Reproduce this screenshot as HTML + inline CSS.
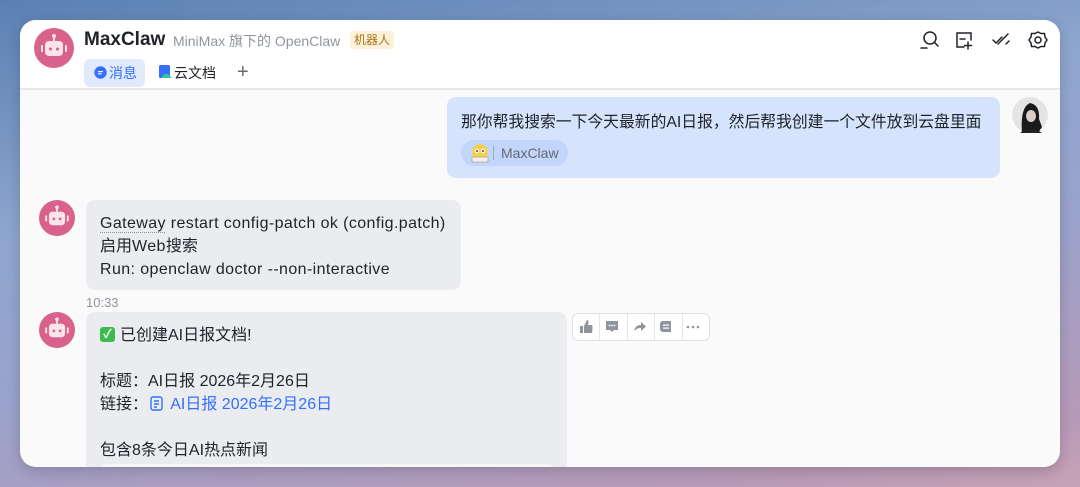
<!DOCTYPE html>
<html><head><meta charset="utf-8"><style>
*{margin:0;padding:0;box-sizing:border-box}
body{width:1080px;height:487px;overflow:hidden;position:relative;font-family:"Liberation Sans","Noto Sans CJK SC",sans-serif;background:linear-gradient(170deg,#5a80b2 0%,#8ea6cf 35%,#9aa3cc 60%,#b89ab8 90%,#c6a2b6 100%)}
.win{position:absolute;left:20px;top:20px;width:1040px;height:447px;background:#fafafa;border-radius:16px;overflow:hidden;box-shadow:0 4px 14px rgba(0,0,0,.18)}
.hdr{position:absolute;left:0;top:0;width:1040px;height:70px;background:#fff;border-bottom:2px solid #e8e8ea}
.abs{position:absolute}
.t15{font-size:16px;color:#1f2329;white-space:nowrap}
.lat{letter-spacing:.4px}
</style></head><body>
<div class="win">
 <div class="hdr">
  <svg class="abs" style="left:14px;top:8px" width="40" height="40" viewBox="0 0 40 40"><circle cx="20" cy="20" r="20" fill="#d9628c"/><rect x="19" y="8" width="2" height="5" fill="#fbe3ec"/><circle cx="20" cy="8" r="2" fill="#fbe3ec"/><rect x="11" y="13" width="18" height="15" rx="4" fill="#fbe3ec"/><rect x="7" y="17" width="2" height="7" rx="1" fill="#fbe3ec"/><rect x="31" y="17" width="2" height="7" rx="1" fill="#fbe3ec"/><circle cx="16.5" cy="21" r="1.5" fill="#d9628c"/><circle cx="23.5" cy="21" r="1.5" fill="#d9628c"/></svg>
  <div class="abs" style="left:64px;top:9px;font-size:19px;font-weight:bold;color:#1f2329">MaxClaw</div>
  <div class="abs" style="left:153px;top:11px;font-size:14px;color:#8f959e">MiniMax 旗下的 OpenClaw</div>
  <div class="abs" style="left:330px;top:11px;width:44px;height:18px;background:#fdf1d8;border-radius:4px;font-size:12px;color:#a8741a;text-align:center;line-height:18px">机器人</div>
  <div class="abs" style="left:64px;top:39px;width:61px;height:28px;background:#e1e9fc;border-radius:6px"></div>
  <svg class="abs" style="left:74px;top:46px" width="13" height="13" viewBox="0 0 13 13"><circle cx="6.5" cy="6.5" r="6.2" fill="#3370ff"/><rect x="4" y="5" width="5" height="1.2" fill="#fff"/><rect x="4" y="7.2" width="3.5" height="1.2" fill="#fff"/></svg>
  <div class="abs" style="left:89px;top:43px;font-size:14px;color:#3370ff">消息</div>
  <svg class="abs" style="left:139px;top:45px" width="13" height="14" viewBox="0 0 13 14"><rect x="0" y="0" width="11" height="13" rx="1.5" fill="#3370ff"/><path d="M3 13 Q4 8 9 9 L13 13Z" fill="#34c7a0"/></svg>
  <div class="abs" style="left:154px;top:43px;font-size:14px;color:#1f2329">云文档</div>
  <div class="abs" style="left:217px;top:41px;font-size:20px;color:#646a73;font-weight:300">+</div>
  <svg class="abs" style="left:898px;top:10px" width="130" height="20" viewBox="0 0 130 20" fill="none" stroke="#1f2329" stroke-width="1.5" stroke-linecap="round">
   <circle cx="12" cy="8" r="6"/><path d="M16.5 12.5 L20 16"/><path d="M3 18 H9"/>
   <path d="M53 10 V3 H39 V17 H46"/><path d="M42 9 H47"/><path d="M50 12 V19 M46.5 15.5 H53.5"/>
   <path d="M75 10 L78 13 L84 7"/><path d="M80 14 L90 4"/><path d="M88 14 L91 11"/>
   <circle cx="120" cy="10" r="3"/><path d="M120 2 L123 3.5 L126.5 3.5 L127 7 L129 10 L127 13 L126.5 16.5 L123 16.5 L120 18 L117 16.5 L113.5 16.5 L113 13 L111 10 L113 7 L113.5 3.5 L117 3.5Z"/>
  </svg>
 </div>
 <div class="abs" style="left:427px;top:77px;width:553px;height:81px;background:#d6e3fc;border-radius:9px"></div>
 <div class="abs t15" style="left:441px;top:89px;font-size:15.8px">那你帮我搜索一下今天最新的AI日报，然后帮我创建一个文件放到云盘里面</div>
 <div class="abs" style="left:441px;top:120px;width:107px;height:26px;background:#c3d5fa;border-radius:13px"></div>
 <svg class="abs" style="left:449px;top:122px" width="22" height="22" viewBox="0 0 22 22"><circle cx="11" cy="10" r="8" fill="#f6cf4a"/><circle cx="8" cy="9" r="2.2" fill="#fff"/><circle cx="14" cy="9" r="2.2" fill="#fff"/><circle cx="8" cy="9" r="1" fill="#6b3b1a"/><circle cx="14" cy="9" r="1" fill="#6b3b1a"/><rect x="3" y="15" width="16" height="5" fill="#f4f0e4" stroke="#888" stroke-width=".5"/></svg>
 <div class="abs" style="left:473px;top:126px;width:1px;height:14px;background:#9aa8c8"></div>
 <div class="abs" style="left:481px;top:125px;font-size:14px;color:#646a73">MaxClaw</div>
 <svg class="abs" style="left:992px;top:77px" width="36" height="36" viewBox="0 0 36 36"><circle cx="18" cy="18" r="18" fill="#e4e4e4"/><path d="M10 36 Q8 10 18 6 Q28 8 27 22 L30 30 L26 36Z" fill="#1a1a1a"/><ellipse cx="19" cy="19" rx="5" ry="6" fill="#d9cfc8"/><path d="M8 36 Q18 28 30 36Z" fill="#222"/></svg>
 <svg class="abs" style="left:19px;top:180px" width="36" height="36" viewBox="0 0 40 40"><circle cx="20" cy="20" r="20" fill="#d9628c"/><rect x="19" y="8" width="2" height="5" fill="#fbe3ec"/><circle cx="20" cy="8" r="2" fill="#fbe3ec"/><rect x="11" y="13" width="18" height="15" rx="4" fill="#fbe3ec"/><rect x="7" y="17" width="2" height="7" rx="1" fill="#fbe3ec"/><rect x="31" y="17" width="2" height="7" rx="1" fill="#fbe3ec"/><circle cx="16.5" cy="21" r="1.5" fill="#d9628c"/><circle cx="23.5" cy="21" r="1.5" fill="#d9628c"/></svg>
 <div class="abs" style="left:66px;top:180px;width:375px;height:90px;background:#ebecef;border-radius:9px"></div>
 <div class="abs t15" style="left:80px;top:192px;line-height:23px"><span class="lat">Gateway restart config-patch ok (config.patch)</span><br>启用<span class="lat">Web</span>搜索<br><span class="lat">Run: openclaw doctor --non-interactive</span></div>
 <div class="abs" style="left:80px;top:212px;width:65px;border-top:1px dotted #8f959e"></div>
 <div class="abs" style="left:66px;top:275px;font-size:13px;color:#8f959e">10:33</div>
 <svg class="abs" style="left:19px;top:292px" width="36" height="36" viewBox="0 0 40 40"><circle cx="20" cy="20" r="20" fill="#d9628c"/><rect x="19" y="8" width="2" height="5" fill="#fbe3ec"/><circle cx="20" cy="8" r="2" fill="#fbe3ec"/><rect x="11" y="13" width="18" height="15" rx="4" fill="#fbe3ec"/><rect x="7" y="17" width="2" height="7" rx="1" fill="#fbe3ec"/><rect x="31" y="17" width="2" height="7" rx="1" fill="#fbe3ec"/><circle cx="16.5" cy="21" r="1.5" fill="#d9628c"/><circle cx="23.5" cy="21" r="1.5" fill="#d9628c"/></svg>
 <div class="abs" style="left:66px;top:292px;width:481px;height:170px;background:#ebecef;border-radius:9px"></div>
 <div class="abs" style="left:80px;top:307px;width:15px;height:15px;background:#3dbb4f;border-radius:3px;color:#fff;font-size:12px;text-align:center;line-height:15px;font-weight:bold">✓</div>
 <div class="abs t15" style="left:100px;top:304px;line-height:23px">已创建AI日报文档!</div>
 <div class="abs t15" style="left:80px;top:350px;line-height:23px">标题：AI日报 2026年2月26日<br>链接：<span style="color:#3370ff">&nbsp;&nbsp;&nbsp;&nbsp;&nbsp;AI日报 2026年2月26日</span></div>
 <svg class="abs" style="left:130px;top:376px" width="13" height="15" viewBox="0 0 13 15" fill="none" stroke="#3370ff" stroke-width="1.4"><rect x="1" y="1" width="11" height="13" rx="2"/><path d="M4 5H9M4 8H9M4 11H7"/></svg>
 <div class="abs t15" style="left:80px;top:419px;line-height:23px">包含8条今日AI热点新闻</div>
 <div class="abs" style="left:80px;top:444px;width:453px;height:10px;background:#f5f5f6;border-radius:6px"></div>
 <div class="abs" style="left:552px;top:293px;width:138px;height:28px;background:#fff;border:1px solid #dee0e3;border-radius:6px;display:flex">
  <div style="flex:1;border-right:1px solid #e5e6e8"></div><div style="flex:1;border-right:1px solid #e5e6e8"></div><div style="flex:1;border-right:1px solid #e5e6e8"></div><div style="flex:1;border-right:1px solid #e5e6e8"></div><div style="flex:1"></div>
 </div>
 <svg class="abs" style="left:552px;top:293px" width="138" height="28" viewBox="0 0 138 28" fill="#8f959e">
  <rect x="8" y="13" width="3" height="7"/><path d="M12 13 L15 7 Q17 7 16.5 10 L16 12 H20 Q21 13 20 20 H12Z"/>
  <path d="M34 8 H46 V17 H42 L40 19 L38 17 H34Z"/><circle cx="37.5" cy="12.5" r=".9" fill="#fff"/><circle cx="40" cy="12.5" r=".9" fill="#fff"/><circle cx="42.5" cy="12.5" r=".9" fill="#fff"/>
  <path d="M62 18 Q63 12 69 12 V9 L74 13.5 L69 18 V15 Q65 15 62 18Z"/>
  <path d="M90 8 H99 V19 H90 L88 17 V10Z"/><rect x="91" y="11.5" width="6" height="1.2" fill="#fff"/><rect x="91" y="14.5" width="6" height="1.2" fill="#fff"/>
  <circle cx="116" cy="14" r="1.3"/><circle cx="121" cy="14" r="1.3"/><circle cx="126" cy="14" r="1.3"/>
 </svg>
</div>
</body></html>
